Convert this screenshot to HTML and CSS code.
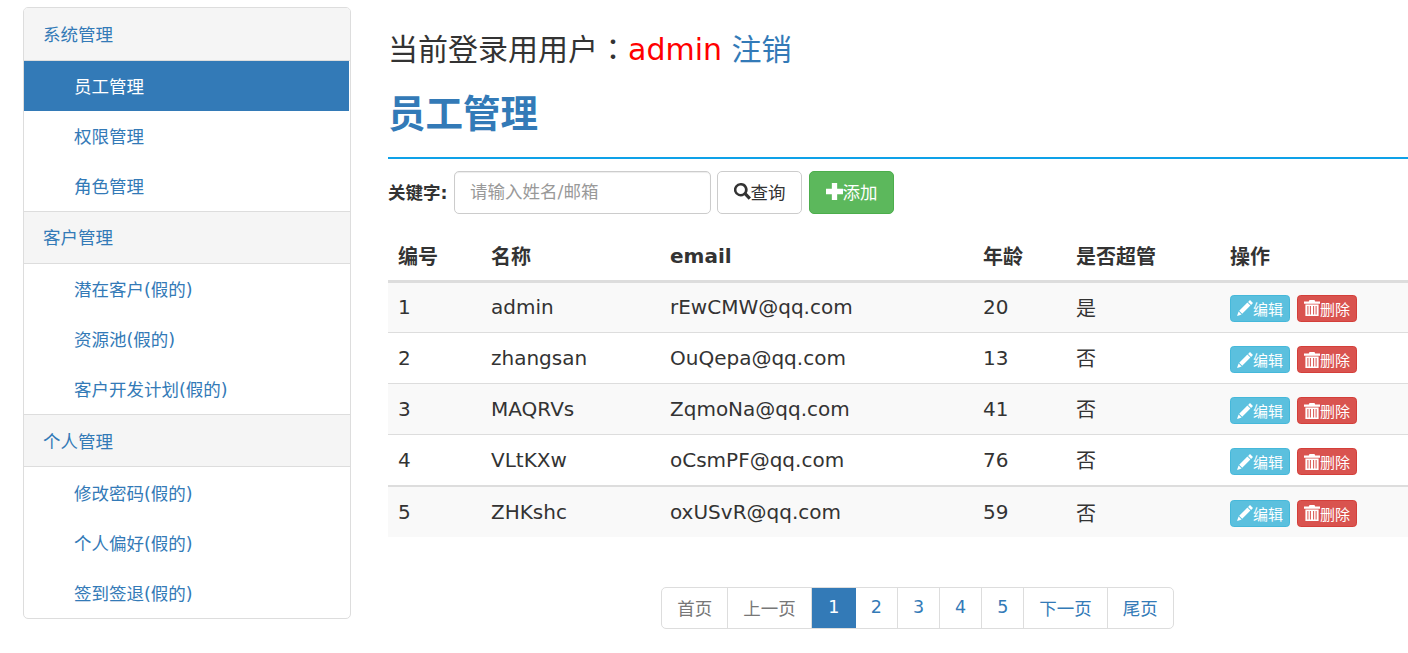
FILE: index.html
```html
<!DOCTYPE html>
<html lang="zh-CN">
<head>
    <meta charset="UTF-8">
    <title>员工管理</title>
    <link rel="stylesheet" href="styles.css">
</head>
<body>
    <svg class="icon-defs" width="0" height="0">
        <symbol id="i-search" viewBox="0 0 16 16"><path fill-rule="evenodd" d="M6.3 0a6.3 6.3 0 1 0 3.5 11.5l4 4.3 2.2-2.2-4-4.2A6.3 6.3 0 0 0 6.3 0zm0 2.3a4 4 0 1 1 0 8 4 4 0 0 1 0-8z"/></symbol>
        <symbol id="i-plus" viewBox="0 0 16 16"><path d="M5.5 0h5v5.5H16v5h-5.5V16h-5v-5.5H0v-5h5.5z"/></symbol>
        <symbol id="i-pencil" viewBox="0 0 16 16"><path d="M13 0l3 3-1.9 1.9-3-3zM10.4 2.6l3 3-8.2 8.2-3-3zM1.6 11.4l3 3L0 16z"/></symbol>
        <symbol id="i-trash" viewBox="0 0 16 16"><path fill-rule="evenodd" d="M5.5 0h5l0.7 1.5H16v2.2H0V1.5h4.8zM1.4 4.6h13.2V16H1.4zM3.4 6v8.6h1V6zM5.9 6v8.6h1V6zM9.1 6v8.6h1V6zM11.6 6v8.6h1V6z"/></symbol>
    </svg>

    <div class="page">
        <div class="sidebar">
            <div class="side-head">系统管理</div>
            <a class="side-item active">员工管理</a>
            <a class="side-item">权限管理</a>
            <a class="side-item">角色管理</a>
            <div class="side-head side-head-mid">客户管理</div>
            <a class="side-item">潜在客户(假的)</a>
            <a class="side-item">资源池(假的)</a>
            <a class="side-item">客户开发计划(假的)</a>
            <div class="side-head">个人管理</div>
            <a class="side-item side-item-low">修改密码(假的)</a>
            <a class="side-item side-item-low">个人偏好(假的)</a>
            <a class="side-item side-item-low">签到签退(假的)</a>
        </div>

        <div class="main">
            <div class="login-line">当前登录用用户<span class="colon" lang="zh-Hant">：</span><span class="user">admin</span> <a class="logout">注销</a></div>
            <h1 class="title">员工管理</h1>

            <div class="toolbar">
                <label class="kw-label">关键字:</label>
                <input class="kw-input" type="text" placeholder="请输入姓名/邮箱">
                <button class="btn btn-default"><svg class="ico"><use href="#i-search"/></svg>查询</button>
                <button class="btn btn-success"><svg class="ico"><use href="#i-plus"/></svg>添加</button>
            </div>

            <table class="staff">
                <thead>
                    <tr>
                        <th class="c-id">编号</th>
                        <th class="c-name">名称</th>
                        <th class="c-email">email</th>
                        <th class="c-age">年龄</th>
                        <th class="c-admin">是否超管</th>
                        <th>操作</th>
                    </tr>
                </thead>
                <tbody>
                    <tr>
                        <td>1</td><td>admin</td><td>rEwCMW@qq.com</td><td>20</td><td>是</td>
                        <td><a class="mini mini-edit"><svg class="mico"><use href="#i-pencil"/></svg>编辑</a><a class="mini mini-del"><svg class="mico"><use href="#i-trash"/></svg>删除</a></td>
                    </tr>
                    <tr>
                        <td>2</td><td>zhangsan</td><td>OuQepa@qq.com</td><td>13</td><td>否</td>
                        <td><a class="mini mini-edit"><svg class="mico"><use href="#i-pencil"/></svg>编辑</a><a class="mini mini-del"><svg class="mico"><use href="#i-trash"/></svg>删除</a></td>
                    </tr>
                    <tr>
                        <td>3</td><td>MAQRVs</td><td>ZqmoNa@qq.com</td><td>41</td><td>否</td>
                        <td><a class="mini mini-edit"><svg class="mico"><use href="#i-pencil"/></svg>编辑</a><a class="mini mini-del"><svg class="mico"><use href="#i-trash"/></svg>删除</a></td>
                    </tr>
                    <tr class="tall-row">
                        <td>4</td><td>VLtKXw</td><td>oCsmPF@qq.com</td><td>76</td><td>否</td>
                        <td><a class="mini mini-edit"><svg class="mico"><use href="#i-pencil"/></svg>编辑</a><a class="mini mini-del"><svg class="mico"><use href="#i-trash"/></svg>删除</a></td>
                    </tr>
                    <tr class="last-row">
                        <td>5</td><td>ZHKshc</td><td>oxUSvR@qq.com</td><td>59</td><td>否</td>
                        <td><a class="mini mini-edit"><svg class="mico"><use href="#i-pencil"/></svg>编辑</a><a class="mini mini-del"><svg class="mico"><use href="#i-trash"/></svg>删除</a></td>
                    </tr>
                </tbody>
            </table>

            <div class="pager-wrap">
                <ul class="pager">
                    <li class="muted">首页</li>
                    <li class="muted">上一页</li>
                    <li class="current">1</li>
                    <li>2</li>
                    <li>3</li>
                    <li>4</li>
                    <li>5</li>
                    <li>下一页</li>
                    <li>尾页</li>
                </ul>
            </div>
        </div>
    </div>
</body>
</html>
```

FILE: styles.css
```css
html, body {
    margin: 0;
    height: 100%;
    overflow: hidden;
}
body {
    font-family: "DejaVu Sans", "Noto Sans CJK SC", sans-serif;
    font-size: 17.5px;
    color: #333;
    background-color: #fff;
}
.icon-defs {
    display: block;
}
.page {
    display: flex;
    align-items: flex-start;
    width: 1447px;
    padding: 7px 0 0 23px;
    box-sizing: border-box;
}

/* sidebar */
.sidebar {
    width: 328px;
    flex-shrink: 0;
    border: 1px solid #ddd;
    border-radius: 5px;
    box-sizing: border-box;
    overflow: hidden;
}
.side-head {
    height: 53px;
    line-height: 54px;
    padding-left: 19px;
    box-sizing: border-box;
    background-color: #f5f5f5;
    color: #337ab7;
    border-bottom: 1px solid #ddd;
    border-top: 1px solid #ddd;
}
.side-head:first-child {
    border-top: none;
}
.side-head-mid {
    line-height: 52px;
}
.side-item {
    display: block;
    height: 50px;
    line-height: 53px;
    padding-left: 50px;
    color: #337ab7;
}
.side-item-low {
    line-height: 55px;
}
.side-item:last-child {
    height: 51px;
}
.side-item.active {
    background-color: #337ab7;
    color: #fff;
    margin-right: 1px;
}

/* main area */
.main {
    flex: 1;
    margin-left: 37px;
    min-width: 0;
}
.login-line {
    font-size: 30px;
    line-height: 42px;
    margin-top: 19px;
    color: #333;
}
.colon {
    font-family: "Noto Sans CJK TC", sans-serif;
}
.user {
    color: #f00;
}
.logout {
    color: #337ab7;
}
.title {
    margin: 0;
    padding: 20px 0 20px;
    font-size: 37.5px;
    line-height: 46px;
    font-weight: bold;
    color: #337ab7;
    border-bottom: 2px solid #0ea1e8;
}

.toolbar {
    display: flex;
    align-items: center;
    margin-top: 12px;
}
.kw-label {
    font-size: 17.5px;
    font-weight: bold;
    margin: 0 6px 3px 0;
    width: 60px;
}
.kw-input {
    width: 257px;
    height: 43px;
    box-sizing: border-box;
    padding: 0 15px 2px;
    font: inherit;
    color: #555;
    border: 1px solid #ccc;
    border-radius: 5px;
    box-shadow: inset 0 1px 1px rgba(0, 0, 0, 0.075);
}
.kw-input::placeholder {
    color: #999;
}
.btn {
    display: flex;
    align-items: center;
    justify-content: center;
    height: 43px;
    box-sizing: border-box;
    padding: 0 0 2px;
    font: inherit;
    border: 1px solid #ccc;
    border-radius: 5px;
    margin-left: 6px;
}
.btn-default {
    width: 85px;
    background-color: #fff;
    color: #333;
}
.btn-success {
    width: 85px;
    margin-left: 7px;
    background-color: #5cb85c;
    border-color: #4cae4c;
    color: #fff;
}
.ico {
    width: 17px;
    height: 17px;
    fill: currentColor;
}

/* table */
.staff {
    width: 100%;
    margin-top: 20px;
    border-collapse: collapse;
    table-layout: fixed;
    font-size: 20px;
}
.staff th {
    text-align: left;
    font-weight: bold;
    height: 47px;
    padding: 0 10px 2px;
    box-sizing: border-box;
    border-bottom: 3px solid #ddd;
}
.staff td {
    height: 51px;
    padding: 0 10px;
    box-sizing: border-box;
    border-top: 1px solid #ddd;
}
.staff tbody tr:first-child td {
    border-top: none;
}
.staff tbody tr:nth-child(odd) td {
    background-color: #f9f9f9;
}
.staff tbody tr.tall-row td {
    height: 52px;
}
.staff tbody tr.last-row td {
    height: 51px;
    border-top: 2px solid #ddd;
}
.c-id { width: 93px; }
.c-name { width: 179px; }
.c-email { width: 313px; }
.c-age { width: 93px; }
.c-admin { width: 154px; }

.mini {
    display: inline-flex;
    align-items: center;
    justify-content: center;
    width: 60px;
    height: 27px;
    margin-top: 4px;
    box-sizing: border-box;
    font-size: 15px;
    color: #fff;
    border-radius: 3.75px;
    vertical-align: middle;
}
.staff tbody tr:first-child .mini,
.staff tbody tr.last-row .mini {
    margin-top: 2px;
}
.mini-edit {
    background-color: #5bc0de;
    border: 1px solid #46b8da;
}
.mini-del {
    margin-left: 7px;
    background-color: #d9534f;
    border: 1px solid #d43f3a;
}
.mico {
    width: 16px;
    height: 16px;
    flex-shrink: 0;
    fill: currentColor;
}

/* pagination */
.pager-wrap {
    display: flex;
    justify-content: center;
    margin-top: 50px;
}
.pager {
    display: flex;
    margin: 0;
    padding: 0;
    list-style: none;
    height: 42px;
    border: 1px solid #ddd;
    border-radius: 5px;
    box-sizing: border-box;
    overflow: hidden;
}
.pager li {
    display: flex;
    align-items: center;
    padding: 0 15px 2px;
    color: #337ab7;
    border-right: 1px solid #ddd;
}
.pager li:last-child {
    border-right: none;
}
.pager li.muted {
    color: #777;
}
.pager li.current {
    padding: 0 16.5px 2px;
    background-color: #337ab7;
    color: #fff;
    border-right: none;
}
```
